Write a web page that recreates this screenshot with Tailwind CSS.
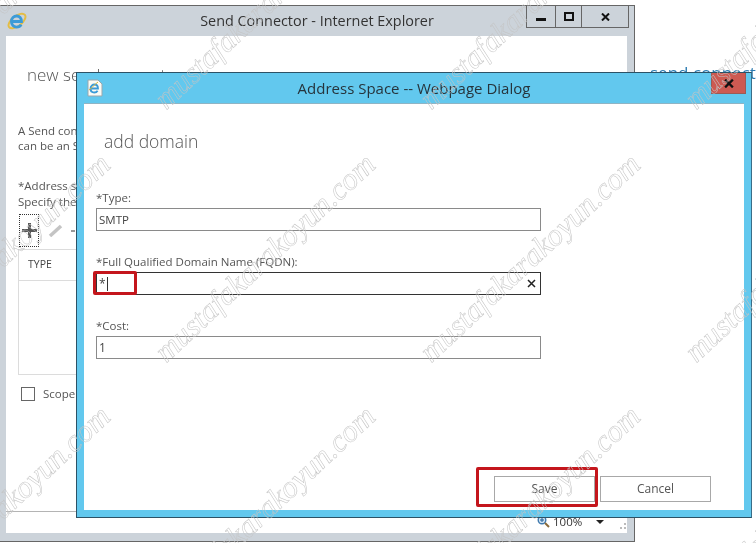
<!DOCTYPE html>
<html lang="en">
<head>
    <meta charset="UTF-8">
    <title>Address Space</title>
    <script src="https://cdn.jsdelivr.net/npm/@tailwindcss/browser@4"></script>
</head>
<body class="bg-white">
<div class="relative w-[756px] h-[543px] overflow-hidden bg-white font-['Open_Sans',sans-serif] blur-[0.35px]">

    <!-- link on the page behind both windows -->
    <div class="absolute left-[650px] top-[60px] text-[17px] text-[#2a7ab0] whitespace-nowrap">send connector</div>

    <!-- Internet Explorer window -->
    <div class="absolute left-0 top-[5px] w-[635px] h-[537px] flex flex-col bg-[#ccd3da] border-t border-r border-b border-[#666]">
        <div class="relative h-[30px] flex-none flex items-center justify-center text-[14.400px] text-[#333]">
            <svg class="absolute left-[7px] top-[5px]" width="20" height="20" viewBox="0 0 18 18" fill="none">
                <ellipse cx="9" cy="9" rx="9" ry="4.500" transform="rotate(-38 9 9)" stroke="#e3bd45" stroke-width="1.800"/>
                <path d="M4.500 9.500h8.500c0-3-1.800-5-4.300-5S4 6.500 4 9.500s2 5 4.700 5c1.800 0 3.200-.8 4-2.300" stroke="#3b9bd8" stroke-width="2.600"/>
            </svg>
            <span>Send Connector - Internet Explorer</span>
            <div class="absolute right-[5px] top-0 h-[22px] w-[103px] flex border-l border-r border-b border-[#666] text-[#111]">
                <div class="w-[29px] flex items-center justify-center border-r border-[#666]"><div class="w-[10px] h-[3px] mt-[5px] bg-[#111]"></div></div>
                <div class="w-[26px] flex items-center justify-center border-r border-[#666]"><div class="w-[10px] h-[9px] border-2 border-[#111]"></div></div>
                <div class="flex-1 flex items-center justify-center">
                    <svg width="9" height="8" viewBox="0 0 9 8"><path d="M1 0.500 8 7.500M8 0.500 1 7.500" stroke="#111" stroke-width="2"/></svg>
                </div>
            </div>
        </div>
        <div class="flex-1 ml-[6px] mr-[7px] mb-[8px] bg-white flex flex-col min-h-0">
            <div class="h-[476px] flex-none pl-[12px] text-[#555] border-b border-[#b4b4b4] overflow-hidden">
                <div class="pl-[9px] pt-[27px] text-[17px] font-light leading-[24px] whitespace-nowrap">new send connector</div>
                <div class="mt-[36px] text-[11.500px] leading-[15px] whitespace-nowrap">A Send connector<br>can be an SMTP</div>
                <div class="mt-[25px] text-[11.500px] leading-[16px] whitespace-nowrap">*Address space<br>Specify the</div>
                <div class="flex items-center mt-[4px] h-[33px]">
                    <div class="ml-[1px] w-[20px] h-[33px] flex items-center justify-center border border-dotted border-[#333]">
                        <svg width="15" height="15" viewBox="0 0 15 15"><path d="M7.500 0v15M0 7.500h15" stroke="#555" stroke-width="3"/></svg>
                    </div>
                    <svg class="ml-[9px]" width="15" height="13" viewBox="0 0 15 13"><path d="M2 12 13 2" stroke="#c4c4c4" stroke-width="3.500"/></svg>
                    <div class="ml-[8px] w-[4px] h-[2px] bg-[#999]"></div>
                </div>
                <div class="mt-[2px] h-[126px] border border-[#dcdcdc] w-[80px]">
                    <div class="h-[31px] border-b border-[#dcdcdc] flex items-center pl-[9px] text-[10.500px] text-[#444]">TYPE</div>
                </div>
                <div class="mt-[10px] flex items-center gap-[8px] pl-[3px] text-[11.500px]">
                    <div class="w-[14px] h-[14px] border border-[#666]"></div>
                    <span>Scope</span>
                </div>
            </div>
            <div class="flex-1 relative">
                <svg class="absolute left-[531px] top-[3px]" width="13" height="13" viewBox="0 0 13 13" fill="none">
                    <circle cx="5" cy="5" r="3.800" fill="#cfe3f3" stroke="#3f79ad" stroke-width="1.400"/>
                    <path d="M3 5h4M5 3v4" stroke="#1f5f99"/>
                    <path d="M8 8l4 4" stroke="#8a6a3a" stroke-width="2"/>
                </svg>
                <span class="absolute left-[547px] top-[2px] text-[11.500px] leading-[16px] text-[#333]">100%</span>
                <div class="absolute left-[590px] top-[8px] w-0 h-0 border-x-[4px] border-x-transparent border-t-[4px] border-t-[#222]"></div>
                <div class="absolute left-[614px] top-[11px] w-[6px] h-[6px] border-r-2 border-b-2 border-dotted border-[#bbb]"></div>
            </div>
        </div>
    </div>

    <!-- Webpage dialog -->
    <div class="absolute left-[76px] top-[72px] w-[676px] h-[446px] flex flex-col bg-[#62c8ee] border border-[#2c5266] border-r-[#3a6e88]">
        <div class="relative h-[30px] flex-none flex items-center justify-center text-[15px] text-[#26343c]">
            <svg class="absolute left-[9px] top-[6px]" width="18" height="18" viewBox="0 0 18 18" fill="none">
                <path d="M2 1h10l4 4v12H2z" fill="#fbfbf5" stroke="#9aa7ad"/>
                <path d="M5 9.500h7c0-2.500-1.400-4-3.500-4S4.500 7 4.500 9.500s1.600 4 3.800 4c1.400 0 2.600-.6 3.300-1.800" stroke="#3b9bd8" stroke-width="1.800"/>
                <path d="M3 11C6 9 9 5 12 3" stroke="#d9b53a"/>
            </svg>
            <span>Address Space -- Webpage Dialog</span>
            <div class="absolute right-[5px] top-0 w-[35px] h-[21px] flex items-center justify-center bg-[#cd5a52] border-b border-x border-[#9c5a55]">
                <svg width="10" height="9" viewBox="0 0 9 8"><path d="M1 0.500 8 7.500M8 0.500 1 7.500" stroke="#111" stroke-width="2"/></svg>
            </div>
        </div>
        <div class="flex-1 mx-[7px] mb-[7px] bg-white relative flex flex-col pl-[12px] border-t border-[#8fb4c4] text-[#555]">
            <h1 class="ml-[8px] mt-[23px] text-[17.500px] leading-[28px] font-light">add domain</h1>
            <label class="mt-[35px] text-[11.500px] leading-[16px]">*Type:</label>
            <div class="mt-[2px] w-[445px] h-[23px] border border-[#8a8a8a] flex items-center pl-[2px] text-[11.500px] text-[#444]">SMTP</div>
            <label class="mt-[23px] text-[11.500px] leading-[16px]">*Full Qualified Domain Name (FQDN):</label>
            <div class="mt-[2px] w-[445px] h-[23px] border border-[#333] flex items-center justify-between pl-[2px] pr-[4px] text-[12px] text-[#444]">
                <span class="border-r border-[#333] pr-px leading-[14px]">*</span>
                <svg width="9" height="9" viewBox="0 0 9 9"><path d="M1 1l7 7M8 1 1 8" stroke="#222" stroke-width="1.500"/></svg>
            </div>
            <label class="mt-[23px] text-[11.500px] leading-[16px]">*Cost:</label>
            <div class="mt-[2px] w-[445px] h-[23px] border border-[#8a8a8a] flex items-center pl-[2px] text-[12px] text-[#444]">1</div>
            <div class="absolute left-[410px] top-[372px] flex gap-[5px]">
                <button class="w-[101px] h-[26px] border border-[#a8a8a8] text-[12px] text-[#555]">Save</button>
                <button class="w-[111px] h-[26px] border border-[#a8a8a8] text-[12px] text-[#555]">Cancel</button>
            </div>
        </div>
    </div>

    <!-- red highlights -->
    <div class="absolute left-[93px] top-[271px] w-[44px] h-[24px] border-[3px] border-[#c4161c] rounded-[2px]"></div>
    <div class="absolute left-[476px] top-[467px] w-[122px] h-[40px] border-[3px] border-[#c4161c] rounded-[2px]"></div>

    <!-- watermark -->
    <div class="absolute left-[0px] top-[5px] -translate-x-1/2 -translate-y-1/2 -rotate-[43deg] text-[31px] italic whitespace-nowrap text-transparent [-webkit-text-stroke:0.5px_#c4c4c4] font-['Liberation_Serif',serif]">mustafakarakoyun.com</div>
    <div class="absolute left-[265px] top-[5px] -translate-x-1/2 -translate-y-1/2 -rotate-[43deg] text-[31px] italic whitespace-nowrap text-transparent [-webkit-text-stroke:0.5px_#c4c4c4] font-['Liberation_Serif',serif]">mustafakarakoyun.com</div>
    <div class="absolute left-[530px] top-[5px] -translate-x-1/2 -translate-y-1/2 -rotate-[43deg] text-[31px] italic whitespace-nowrap text-transparent [-webkit-text-stroke:0.5px_#c4c4c4] font-['Liberation_Serif',serif]">mustafakarakoyun.com</div>
    <div class="absolute left-[795px] top-[5px] -translate-x-1/2 -translate-y-1/2 -rotate-[43deg] text-[31px] italic whitespace-nowrap text-transparent [-webkit-text-stroke:0.5px_#c4c4c4] font-['Liberation_Serif',serif]">mustafakarakoyun.com</div>
    <div class="absolute left-[0px] top-[258px] -translate-x-1/2 -translate-y-1/2 -rotate-[43deg] text-[31px] italic whitespace-nowrap text-transparent [-webkit-text-stroke:0.5px_#c4c4c4] font-['Liberation_Serif',serif]">mustafakarakoyun.com</div>
    <div class="absolute left-[265px] top-[258px] -translate-x-1/2 -translate-y-1/2 -rotate-[43deg] text-[31px] italic whitespace-nowrap text-transparent [-webkit-text-stroke:0.5px_#c4c4c4] font-['Liberation_Serif',serif]">mustafakarakoyun.com</div>
    <div class="absolute left-[530px] top-[258px] -translate-x-1/2 -translate-y-1/2 -rotate-[43deg] text-[31px] italic whitespace-nowrap text-transparent [-webkit-text-stroke:0.5px_#c4c4c4] font-['Liberation_Serif',serif]">mustafakarakoyun.com</div>
    <div class="absolute left-[795px] top-[258px] -translate-x-1/2 -translate-y-1/2 -rotate-[43deg] text-[31px] italic whitespace-nowrap text-transparent [-webkit-text-stroke:0.5px_#c4c4c4] font-['Liberation_Serif',serif]">mustafakarakoyun.com</div>
    <div class="absolute left-[0px] top-[510px] -translate-x-1/2 -translate-y-1/2 -rotate-[43deg] text-[31px] italic whitespace-nowrap text-transparent [-webkit-text-stroke:0.5px_#c4c4c4] font-['Liberation_Serif',serif]">mustafakarakoyun.com</div>
    <div class="absolute left-[265px] top-[510px] -translate-x-1/2 -translate-y-1/2 -rotate-[43deg] text-[31px] italic whitespace-nowrap text-transparent [-webkit-text-stroke:0.5px_#c4c4c4] font-['Liberation_Serif',serif]">mustafakarakoyun.com</div>
    <div class="absolute left-[530px] top-[510px] -translate-x-1/2 -translate-y-1/2 -rotate-[43deg] text-[31px] italic whitespace-nowrap text-transparent [-webkit-text-stroke:0.5px_#c4c4c4] font-['Liberation_Serif',serif]">mustafakarakoyun.com</div>
    <div class="absolute left-[795px] top-[510px] -translate-x-1/2 -translate-y-1/2 -rotate-[43deg] text-[31px] italic whitespace-nowrap text-transparent [-webkit-text-stroke:0.5px_#c4c4c4] font-['Liberation_Serif',serif]">mustafakarakoyun.com</div>
</div>
</body>
</html>
